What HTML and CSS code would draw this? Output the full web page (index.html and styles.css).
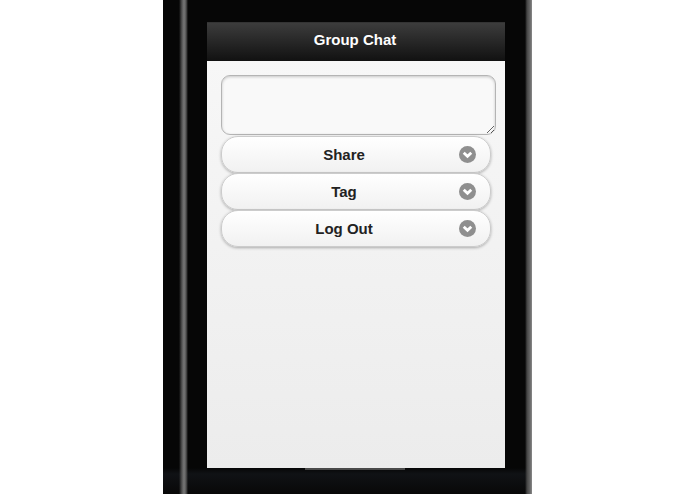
FILE: index.html
```html
<!DOCTYPE html>
<html lang="en">
<head>
  <meta charset="UTF-8">
  <title>Group Chat</title>
  <link rel="stylesheet" href="styles.css">
</head>
<body>
  <div class="phone">
    <div class="screen">
      <div class="header">Group Chat</div>
      <div class="content">
        <textarea class="message"></textarea>
        <div class="btn-list">
          <div class="btn">
            <span>Share</span>
            <svg class="btn-icon" viewBox="0 0 18 18"><circle cx="9" cy="9" r="9" fill="#8f8f8f"/><path d="M5 7.2 9 11l4-3.8" fill="none" stroke="#fff" stroke-width="3"/></svg>
          </div>
          <div class="btn">
            <span>Tag</span>
            <svg class="btn-icon" viewBox="0 0 18 18"><circle cx="9" cy="9" r="9" fill="#8f8f8f"/><path d="M5 7.2 9 11l4-3.8" fill="none" stroke="#fff" stroke-width="3"/></svg>
          </div>
          <div class="btn">
            <span>Log Out</span>
            <svg class="btn-icon" viewBox="0 0 18 18"><circle cx="9" cy="9" r="9" fill="#8f8f8f"/><path d="M5 7.2 9 11l4-3.8" fill="none" stroke="#fff" stroke-width="3"/></svg>
          </div>
        </div>
      </div>
    </div>
    <div class="home-strip"></div>
  </div>
</body>
</html>
```

FILE: styles.css
```css
html, body {
  height: 100%;
}
body {
  margin: 0;
  background-color: #fff;
  font-family: "Liberation Sans", Arial, sans-serif;
  overflow: hidden;
}
.phone {
  width: 369px;
  height: 494px;
  margin-left: 163px;
  padding: 22px 27px 0 44px;
  box-sizing: border-box;
  background-color: #060606;
  background-image:
    linear-gradient(90deg, transparent 16px, #555 19px, #777 21px, #555 23px, transparent 25px),
    linear-gradient(270deg, #8a8a8a 0, #666 2px, #444 5px, transparent 7px),
    linear-gradient(180deg, #060606 468px, #101215 474px, #080808 494px);
}
.screen {
  width: 298px;
  height: 446px;
  display: flex;
  flex-direction: column;
  background: linear-gradient(180deg, #f8f8f8, #ececec);
}
.header {
  height: 38px;
  line-height: 34px;
  padding-right: 2px;
  flex-shrink: 0;
  text-align: center;
  color: #fff;
  font-size: 15px;
  font-weight: bold;
  background: linear-gradient(180deg, #3c3c3c, #111);
  border-top: 1px solid #333;
}
.content {
  padding: 14px 9px 0 14px;
  display: flex;
  flex-direction: column;
}
.message {
  display: block;
  width: 275px;
  height: 60px;
  margin: 0;
  box-sizing: border-box;
  border: 1px solid #b4b4b4;
  border-radius: 9px;
  background-color: #f9f9f9;
  box-shadow: inset 0 1px 3px rgba(0, 0, 0, 0.2);
  resize: vertical;
  outline: none;
}
.btn-list {
  width: 270px;
  margin-top: 1px;
  display: flex;
  flex-direction: column;
}
.btn {
  position: relative;
  height: 37px;
  box-sizing: border-box;
  padding-right: 24px;
  display: flex;
  align-items: center;
  justify-content: center;
  font-size: 15px;
  font-weight: bold;
  color: #222;
  border: 1px solid #ccc;
  border-radius: 17px;
  background: linear-gradient(180deg, #fff, #f1f1f1);
  box-shadow: 0 1px 3px rgba(0, 0, 0, 0.3);
}
.btn-icon {
  position: absolute;
  right: 14px;
  top: 9px;
  width: 17px;
  height: 17px;
}
.home-strip {
  width: 100px;
  height: 2px;
  margin-left: 98px;
  background-color: #4a4a4a;
}
```
